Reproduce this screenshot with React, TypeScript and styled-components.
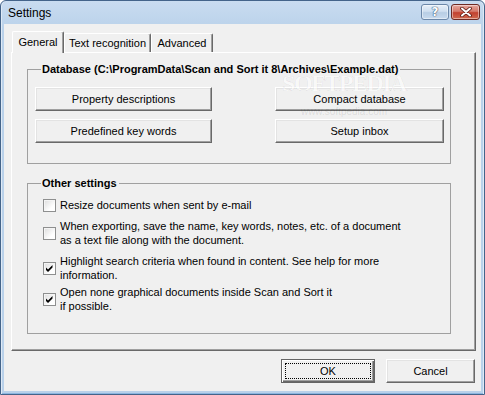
import React from "react";
import styled, { createGlobalStyle } from "styled-components";

const Global = createGlobalStyle`
  html, body { margin: 0; padding: 0; background: #fff; }
  body { font-family: "Liberation Sans", Arial, sans-serif; font-size: 11px; color: #000; }
  * { box-sizing: border-box; }
`;

const Window = styled.div`
  position: relative;
  width: 485px;
  height: 395px;
  display: flex;
  flex-direction: column;
  background: linear-gradient(#c9dcf0, #b9d1ea 30px, #b9d1ea);
  border: 1px solid #44648a;
  border-radius: 6px 6px 0 0;
  padding: 0 3px 3px 3px;
  box-shadow: inset 1px 0 0 #dfeaf6, inset -1px 0 0 #dfeaf6, inset 0 -1px 0 #8cb6e0;
`;

const TitleBar = styled.div`
  height: 23px;
  display: flex;
  align-items: center;
  padding: 0 1px 0 4px;
`;

const Title = styled.div`
  flex: 1;
  font-size: 12px;
  color: #000;
  padding-top: 1px;
`;

const CaptionButtons = styled.div`
  display: flex;
  gap: 2px;
  align-self: flex-start;
  margin-top: 3px;
`;

const CaptionButton = styled.div<{ $close?: boolean }>`
  width: ${(p) => (p.$close ? 29 : 28)}px;
  height: 16px;
  border-radius: 3px;
  border: 1px solid ${(p) => (p.$close ? "#6e2a22" : "#6b87a8")};
  background: ${(p) =>
    p.$close
      ? "linear-gradient(#e6a79d, #d57a6b 45%, #c2412f 55%, #cf6a4f)"
      : "linear-gradient(#e8f0f8, #cfdff0 45%, #b7cde4 55%, #c9dbee)"};
  box-shadow: inset 0 0 0 1px rgba(255, 255, 255, 0.45);
  display: flex;
  align-items: center;
  justify-content: center;
`;

const HelpGlyph = styled.span`
  font-family: "DejaVu Sans", sans-serif;
  font-weight: bold;
  font-size: 12px;
  line-height: 12px;
  color: #fff;
  text-shadow: 0 0 1px #3d5878, 0 0 1px #3d5878, 0 0 1px #3d5878;
`;

const Client = styled.div`
  flex: 1;
  background: #f0f0f0;
  display: flex;
  flex-direction: column;
  padding: 7px 5px 0 7px;
`;

const TabStrip = styled.div`
  display: flex;
  align-items: flex-end;
  height: 21px;
  padding-left: 1px;
  position: relative;
  z-index: 1;
`;

const Tab = styled.div<{ $active?: boolean; $w: number }>`
  width: ${(p) => p.$w}px;
  height: ${(p) => (p.$active ? 22 : 19)}px;
  margin-bottom: ${(p) => (p.$active ? -1 : 0)}px;
  background: #f0f0f0;
  border-top: 1px solid #fff;
  border-left: 1px solid #fff;
  border-right: 1px solid #696969;
  box-shadow: inset -1px 0 0 #a0a0a0;
  border-radius: 2px 2px 0 0;
  display: flex;
  align-items: flex-start;
  justify-content: center;
  padding-top: ${(p) => (p.$active ? 4 : 3)}px;
  line-height: 13px;
  white-space: nowrap;
`;

const Panel = styled.div`
  height: 299px;
  background: #f0f0f0;
  border-top: 1px solid #fff;
  border-left: 1px solid #fff;
  border-right: 1px solid #696969;
  border-bottom: 1px solid #696969;
  box-shadow: inset -1px -1px 0 #a0a0a0;
  padding: 10px 24px 0 15px;
  display: flex;
  flex-direction: column;
  gap: 13px;
`;

const Group = styled.fieldset<{ $pb: number }>`
  margin: 0;
  min-inline-size: 0;
  border: 1px solid #a0a0a0;
  padding: 0 6px ${(p) => p.$pb}px 7px;
`;

const Legend = styled.legend`
  margin-left: 6px;
  padding: 0 2px 0 1px;
  font-weight: bold;
  line-height: 13px;
  white-space: nowrap;
`;

const ButtonGrid = styled.div`
  display: grid;
  grid-template-columns: 177px 169px;
  justify-content: space-between;
  row-gap: 8px;
  padding-top: 11px;
`;

const Button = styled.button<{ $default?: boolean; $w?: number }>`
  font-family: "Liberation Sans", Arial, sans-serif;
  font-size: 11px;
  color: #000;
  height: 24px;
  width: ${(p) => (p.$w ? `${p.$w}px` : "auto")};
  background: #f0f0f0;
  border: 1px solid;
  border-color: ${(p) => (p.$default ? "#646464" : "#fff #696969 #696969 #fff")};
  box-shadow: ${(p) =>
    p.$default
      ? "inset 1px 1px 0 #fff, inset -1px -1px 0 #696969, inset -2px -2px 0 #a0a0a0"
      : "inset -1px -1px 0 #a0a0a0, inset 1px 1px 0 #e3e3e3"};
  padding: 0;
  display: flex;
  align-items: center;
  justify-content: center;
  cursor: default;
`;

const FocusRect = styled.span`
  display: flex;
  align-items: center;
  justify-content: center;
  width: calc(100% - 8px);
  height: calc(100% - 8px);
  outline: 1px dotted #000;
`;

const CheckList = styled.div`
  display: flex;
  flex-direction: column;
  padding: 8px 0 0 8px;
`;

const CheckRow = styled.label<{ $mt: number }>`
  display: flex;
  align-items: center;
  gap: 4px;
  margin-top: ${(p) => p.$mt}px;
  line-height: 14px;
  white-space: nowrap;
`;

const Box = styled.span`
  width: 13px;
  height: 13px;
  flex: none;
  border: 1px solid #8e8f8f;
  background: linear-gradient(135deg, #dcdcdc, #fff 70%);
  box-shadow: inset 1px 1px 0 #f4f4f4;
  display: flex;
`;

const Footer = styled.div`
  display: flex;
  justify-content: flex-end;
  gap: 11px;
  padding: 8px 1px 0 0;
`;

const Watermark = styled.div`
  position: absolute;
  left: 278px;
  top: 70px;
  width: 130px;
  display: flex;
  flex-direction: column;
  align-items: center;
  pointer-events: none;
`;

const WaterBig = styled.span`
  font-family: "Liberation Serif", serif;
  font-size: 24px;
  line-height: 24px;
  font-weight: bold;
  letter-spacing: -1.5px;
  color: rgba(255, 255, 255, 0.6);
  -webkit-text-stroke: 0.6px rgba(0, 0, 0, 0.09);
`;

const WaterSmall = styled.span`
  font-size: 10px;
  line-height: 12px;
  color: rgba(0, 0, 0, 0.1);
  margin-top: 11px;
`;

const Check = ({ on }: { on: boolean }) => (
  <Box>
    {on && (
      <svg width="11" height="11" viewBox="0 0 11 11">
        <polygon points="2,4.5 4,6.5 8.5,2 8.5,4.5 4,9 2,7" fill="#000" />
      </svg>
    )}
  </Box>
);

const items: { on: boolean; mt: number; text: React.ReactNode }[] = [
  { on: false, mt: 0, text: "Resize documents when sent by e-mail" },
  {
    on: false,
    mt: 7,
    text: (
      <>
        When exporting, save the name, key words, notes, etc. of a document
        <br />
        as a text file along with the document.
      </>
    ),
  },
  {
    on: true,
    mt: 7,
    text: (
      <>
        Highlight search criteria when found in content. See help for more
        <br />
        information.
      </>
    ),
  },
  {
    on: true,
    mt: 3,
    text: (
      <>
        Open none graphical documents inside Scan and Sort it
        <br />
        if possible.
      </>
    ),
  },
];

export default function App() {
  return (
    <>
      <Global />
      <Window>
        <TitleBar>
          <Title>Settings</Title>
          <CaptionButtons>
            <CaptionButton>
              <HelpGlyph>?</HelpGlyph>
            </CaptionButton>
            <CaptionButton $close>
              <svg width="14" height="10" viewBox="0 0 14 10">
                <path d="M3 1.5 L11 8.5 M11 1.5 L3 8.5" stroke="#5a1a12" strokeWidth="3.6" strokeLinecap="round" />
                <path d="M3 1.5 L11 8.5 M11 1.5 L3 8.5" stroke="#fff" strokeWidth="2" strokeLinecap="round" />
              </svg>
            </CaptionButton>
          </CaptionButtons>
        </TitleBar>
        <Client>
          <TabStrip>
            <Tab $active $w={52}>General</Tab>
            <Tab $w={87}>Text recognition</Tab>
            <Tab $w={62}>Advanced</Tab>
          </TabStrip>
          <Panel>
            <Group $pb={20}>
              <Legend>Database (C:\ProgramData\Scan and Sort it 8\Archives\Example.dat)</Legend>
              <ButtonGrid>
                <Button>Property descriptions</Button>
                <Button>Compact database</Button>
                <Button>Predefined key words</Button>
                <Button>Setup inbox</Button>
              </ButtonGrid>
            </Group>
            <Group $pb={20}>
              <Legend>Other settings</Legend>
              <CheckList>
                {items.map((it, i) => (
                  <CheckRow key={i} $mt={it.mt}>
                    <Check on={it.on} />
                    <span>{it.text}</span>
                  </CheckRow>
                ))}
              </CheckList>
            </Group>
          </Panel>
          <Footer>
            <Button $default $w={94}>
              <FocusRect>OK</FocusRect>
            </Button>
            <Button $w={89}>Cancel</Button>
          </Footer>
        </Client>
        <Watermark>
          <WaterBig>SOFTPEDIA</WaterBig>
          <WaterSmall>www.softpedia.com</WaterSmall>
        </Watermark>
      </Window>
    </>
  );
}
